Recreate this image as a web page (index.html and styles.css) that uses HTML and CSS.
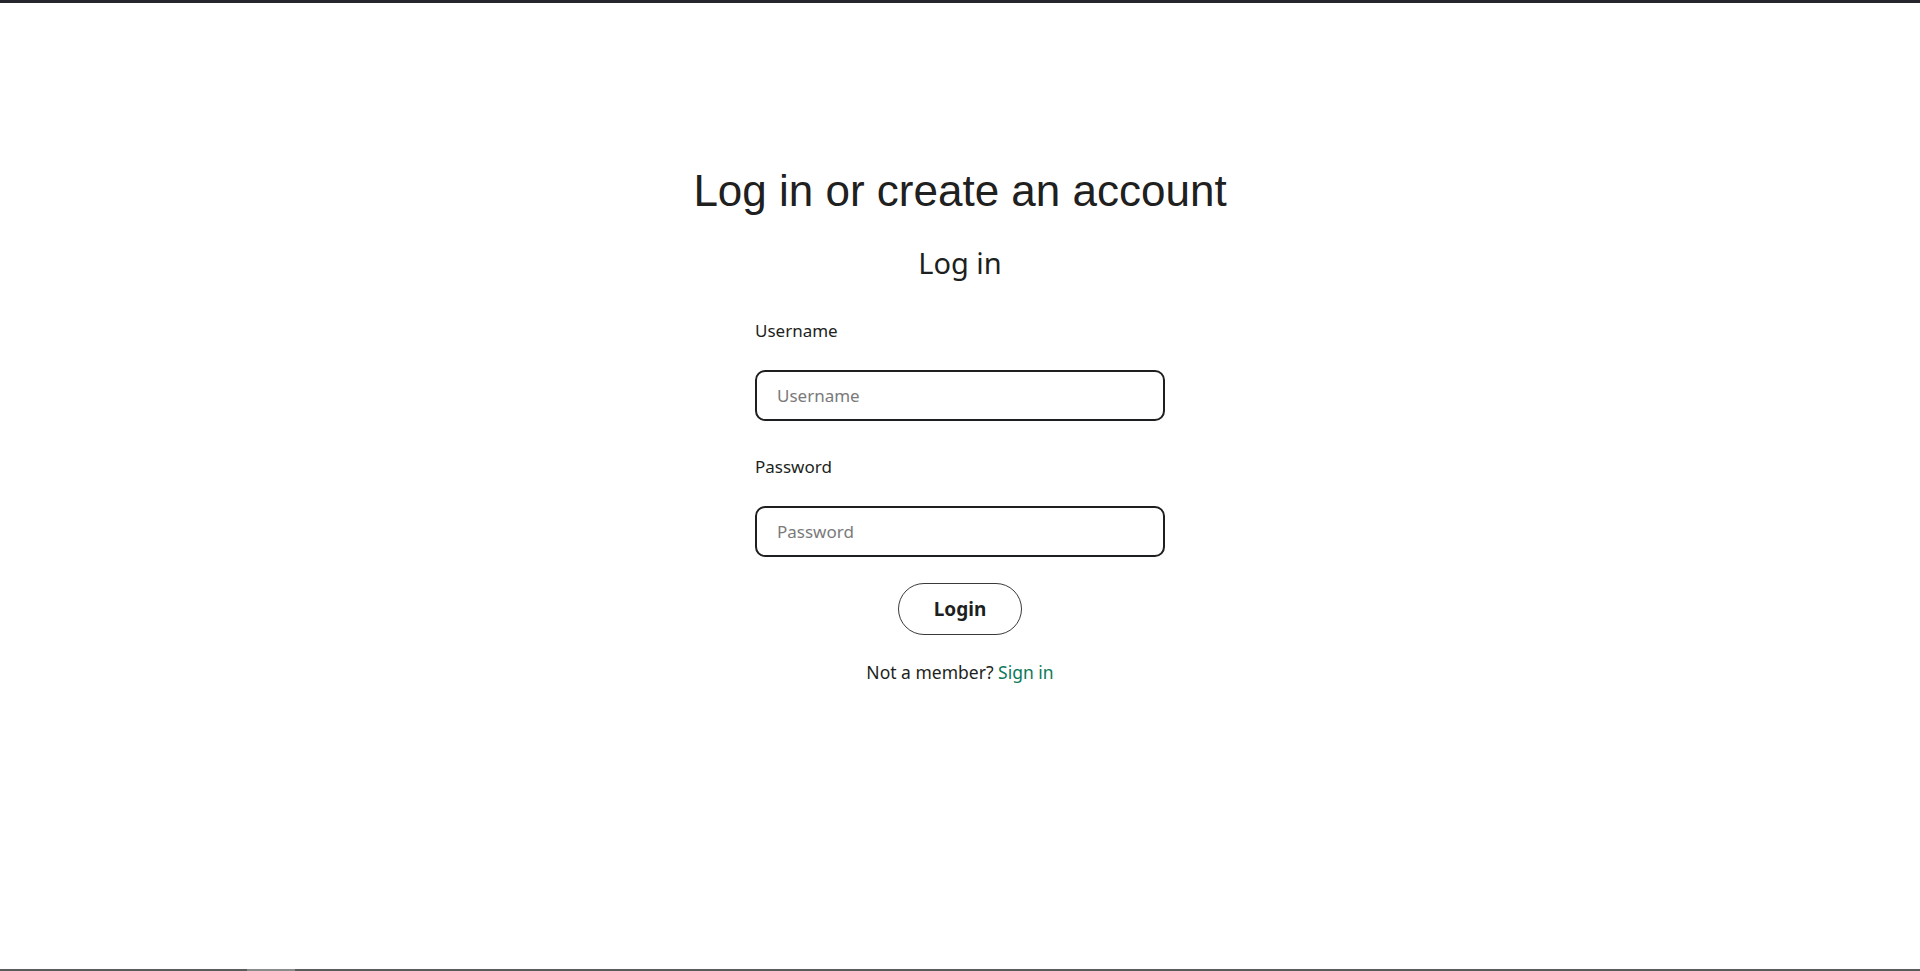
FILE: index.html
```html
<!DOCTYPE html>
<html lang="en">
<head>
<meta charset="utf-8">
<title>Log in</title>
<link rel="stylesheet" href="styles.css">
</head>
<body>
<div class="page">
  <main class="main">
    <h1 class="title">Log in or create an account</h1>
    <section class="login">
      <h2 class="subtitle">Log in</h2>
      <form class="form">
        <label class="label" for="username">Username</label>
        <input class="input" id="username" type="text" placeholder="Username">
        <label class="label" for="password">Password</label>
        <input class="input" id="password" type="password" placeholder="Password">
        <button class="btn" type="button">Login</button>
      </form>
      <p class="signup">Not a member? <a class="link" href="#">Sign in</a></p>
    </section>
  </main>
  <div class="bottombar"><span class="thumb"></span></div>
</div>
</body>
</html>
```

FILE: styles.css
```css
* { box-sizing: border-box; }
html, body { margin: 0; padding: 0; height: 100%; }
body {
  background: #fff;
  color: #1d1f21;
  font-family: "Noto Sans", "Open Sans", sans-serif;
}
.page {
  min-height: 100vh;
  display: flex;
  flex-direction: column;
  border-top: 3px solid #25262e;
}
.main {
  flex: 1;
  display: flex;
  flex-direction: column;
  align-items: center;
  padding-top: 160px;
}
.title {
  margin: 0;
  font-family: "Liberation Sans", Arial, sans-serif;
  font-weight: 400;
  font-size: 44px;
  line-height: 56px;
  color: #1f2020;
}
.login {
  display: flex;
  flex-direction: column;
  align-items: center;
  width: 410px;
}
.subtitle {
  margin: 24px 0 0;
  font-size: 29px;
  font-weight: 400;
  line-height: 40px;
}
.form {
  width: 410px;
  display: flex;
  flex-direction: column;
  margin-top: 37px;
}
.label {
  font-size: 17px;
  line-height: 22px;
  margin-bottom: 28px;
}
.input {
  width: 410px;
  height: 51px;
  border: 2px solid #1d1f21;
  border-radius: 10px;
  padding: 0 20px;
  font-family: inherit;
  font-size: 17px;
  color: #1d1f21;
  outline: none;
  margin-bottom: 35px;
}
.input::placeholder { color: #7a7a7a; }
#password { margin-bottom: 26px; }
.btn {
  align-self: center;
  width: 124px;
  height: 52px;
  border: 1px solid #3a3a3a;
  border-radius: 26px;
  background: #fff;
  font-family: inherit;
  font-weight: 700;
  font-size: 19px;
  color: #1d1f21;
  padding: 0;
}
.signup {
  margin: 25px 0 0;
  font-size: 17.5px;
  line-height: 24px;
}
.link { color: #0b7a5a; text-decoration: none; }
.bottombar {
  height: 2px;
  background: #5c5c5c;
  position: relative;
}
.thumb {
  position: absolute;
  left: 247px;
  top: 0;
  width: 48px;
  height: 2px;
  background: #8c8c8c;
}
```
